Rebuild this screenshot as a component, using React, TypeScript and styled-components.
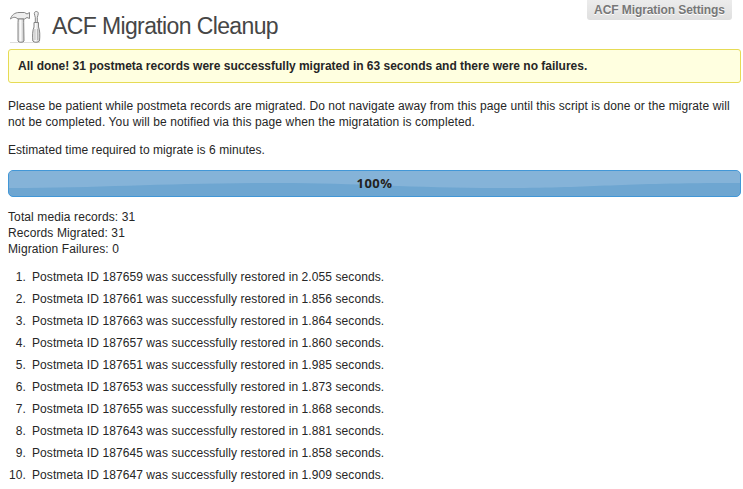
import React from "react";
import styled, { createGlobalStyle } from "styled-components";

const GlobalStyle = createGlobalStyle`
  html, body { margin: 0; padding: 0; background: #fff; }
  body {
    height: 489px;
    overflow: hidden;
    color: #262626;
    font: 12px/16px "Liberation Sans", Arial, sans-serif;
  }
`;

const Page = styled.main`
  display: flex;
  flex-direction: column;
  width: 733px;
  padding: 0 2px 0 8px;
`;

const Header = styled.header`
  display: flex;
  align-items: flex-start;
  height: 49px;
`;

const ToolsIcon = styled.svg`
  flex: none;
  width: 36px;
  height: 36px;
  margin-top: 8px;
`;

const Title = styled.h2`
  flex: 1;
  margin: 11px 0 0 8px;
  color: #464646;
  font-size: 23px;
  font-weight: 400;
  line-height: 30px;
  letter-spacing: -0.62px;
  white-space: nowrap;
`;

const SettingsTab = styled.a`
  box-sizing: border-box;
  width: 145px;
  height: 20px;
  margin-right: 9px;
  border-radius: 0 0 3px 3px;
  background: linear-gradient(#ececec, #dfdfdf);
  color: #777;
  font-size: 12px;
  font-weight: 700;
  line-height: 20px;
  letter-spacing: -0.08px;
  text-align: center;
  text-shadow: 0 1px 0 #fff;
  white-space: nowrap;
`;

const Notice = styled.div`
  box-sizing: border-box;
  height: 34px;
  padding: 0 9px;
  border: 1px solid #e6db55;
  border-radius: 3px;
  background: #ffffe0;
  font-weight: 700;
  line-height: 32px;
  letter-spacing: -0.01px;
  white-space: nowrap;
`;

const Paragraph = styled.p<{ $top: number }>`
  margin: ${(p) => p.$top}px 0 0;
`;

const Line = styled.span<{ $spacing?: number }>`
  display: block;
  letter-spacing: ${(p) => p.$spacing ?? 0.11}px;
  white-space: nowrap;
`;

const Progress = styled.div`
  display: grid;
  box-sizing: border-box;
  height: 27px;
  margin-top: 12px;
  overflow: hidden;
  border: 1px solid #4297d7;
  border-radius: 5px;
  background: #6ea6d1;
`;

const Wave = styled.svg`
  grid-area: 1 / 1;
  width: 100%;
  height: 25px;
`;

const Percent = styled.span`
  grid-area: 1 / 1;
  color: #222;
  font: 700 13px/24px "Open Sans", sans-serif;
  letter-spacing: 0.45px;
  text-align: center;
`;

const Results = styled.ol`
  display: grid;
  row-gap: 6px;
  margin: 12px 0 0;
  padding: 0;
  list-style: none;
`;

const Result = styled.li`
  display: grid;
  grid-template-columns: 18px auto;
  column-gap: 6px;
  letter-spacing: 0.085px;
  white-space: nowrap;
`;

const Ordinal = styled.span`
  text-align: right;
`;

const records: [string, string][] = [
  ["187659", "2.055"],
  ["187661", "1.856"],
  ["187663", "1.864"],
  ["187657", "1.860"],
  ["187651", "1.985"],
  ["187653", "1.873"],
  ["187655", "1.868"],
  ["187643", "1.881"],
  ["187645", "1.858"],
  ["187647", "1.909"],
];

function Tools() {
  return (
    <ToolsIcon viewBox="0 0 36 36" aria-hidden="true">
      <defs>
        <linearGradient id="metal">
          <stop offset="0" stopColor="#d8d8d8" />
          <stop offset="0.4" stopColor="#fcfcfc" />
          <stop offset="1" stopColor="#bdbdbd" />
        </linearGradient>
      </defs>
      <path d="M2 34.500H32" stroke="#ddd" />
      <path
        d="M2.500 11C3.500 7 7 4.500 11 4.500H16.500L19 6L21.500 4.500V10.500L19 9.500L16.500 11H10C7 8.500 5 9 2.500 11Z"
        fill="#eee" stroke="#858585" strokeLinejoin="round"
      />
      <path d="M10.300 11H15.700V14.500L16 33C15.500 34.700 10.500 34.700 10 33V14.500Z" fill="url(#metal)" stroke="#858585" />
      <path d="M26.300 5.500C26.300 2.800 30.300 2.800 30.300 5.500C30.300 7 29.300 8.500 29.300 9.500V17H27.300V9.500C27.300 8.500 26.300 7 26.300 5.500Z" fill="#eee" stroke="#858585" />
      <path
        d="M26 14.500H30.500V19C32 22 32 28 31.500 33C30 34.700 26 34.700 24.800 33C24.300 28 24.500 22 26 19Z"
        fill="url(#metal)" stroke="#858585"
      />
      <path d="M27 21V32M29.500 21V32" stroke="#aaa" strokeWidth=".8" />
    </ToolsIcon>
  );
}

export default function App() {
  return (
    <>
      <GlobalStyle />
      <Page>
        <Header>
          <Tools />
          <Title>ACF Migration Cleanup</Title>
          <SettingsTab>ACF Migration Settings</SettingsTab>
        </Header>
        <Notice>
          All done! 31 postmeta records were successfully migrated in 63 seconds and there were no failures.
        </Notice>
        <Paragraph $top={15}>
          <Line $spacing={0.083}>Please be patient while postmeta records are migrated. Do not navigate away from this page until this script is done or the migrate will</Line>
          <Line $spacing={0.115}>not be completed. You will be notified via this page when the migratation is completed.</Line>
        </Paragraph>
        <Paragraph $top={12}>
          <Line $spacing={0.06}>Estimated time required to migrate is 6 minutes.</Line>
        </Paragraph>
        <Progress>
          <Wave viewBox="0 0 731 25" preserveAspectRatio="none" aria-hidden="true">
            <path d="M0 0H731V12C600 12 590 17 490 17C400 17 350 12 270 12C150 12 100 17 0 17Z" fill="#85b3d8" />
          </Wave>
          <Percent>100%</Percent>
        </Progress>
        <Paragraph $top={12}>
          <Line>Total media records: 31</Line>
          <Line>Records Migrated: 31</Line>
          <Line>Migration Failures: 0</Line>
        </Paragraph>
        <Results>
          {records.map(([id, seconds], index) => (
            <Result key={id}>
              <Ordinal>{index + 1}.</Ordinal>
              <span>Postmeta ID {id} was successfully restored in {seconds} seconds.</span>
            </Result>
          ))}
        </Results>
      </Page>
    </>
  );
}
